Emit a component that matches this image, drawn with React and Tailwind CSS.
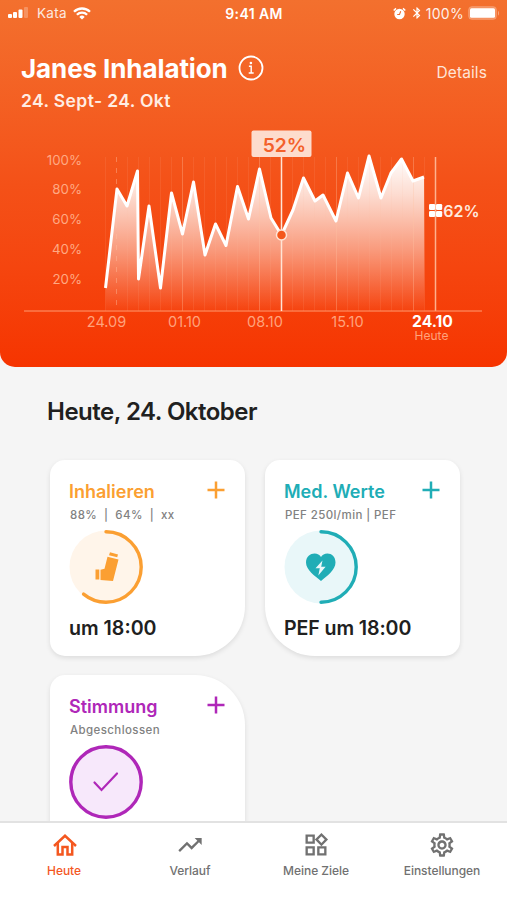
import {
  MdBluetooth,
  MdOutlineSettings,
  MdOutlineWidgets,
  MdTrendingUp,
} from "react-icons/md";

const points = [
  [105.5, 288], [117, 189], [127, 206], [137.5, 171], [138.5, 279],
  [149, 206], [160.5, 288], [171.5, 193], [182.5, 234], [193.5, 182],
  [205, 255], [215.5, 224], [226, 245.5], [237.5, 186.5], [248.5, 219],
  [259.5, 169], [271, 218], [281.5, 235], [293, 210], [303.5, 178],
  [315, 201], [323, 195], [336, 221], [347.5, 173], [358.5, 198],
  [369, 156], [381, 198], [391, 173], [401.5, 159], [413, 181], [424, 177],
];

const line = points.map((p) => p.join(",")).join(" ");

// one grid line per day, week starts are brighter
const gridLines = Array.from({ length: 31 }, (_, i) => 105.5 + i * 11);
const strongLines = [7, 14, 21, 28];

const yLabels = [
  { text: "100%", y: 165 },
  { text: "80%", y: 194 },
  { text: "60%", y: 223.5 },
  { text: "40%", y: 254 },
  { text: "20%", y: 283.5 },
];

const xLabels = [
  { text: "24.09", x: 106.5 },
  { text: "01.10", x: 184.5 },
  { text: "08.10", x: 265 },
  { text: "15.10", x: 347.5 },
];

function StatusBar() {
  return (
    <div className="grid h-[26px] grid-cols-3 items-center pl-2 pr-[7px] text-white">
      <div className="flex items-center">
        <svg width="21" height="12" viewBox="0 0 21 12" fill="currentColor">
          <rect x="0" y="7" width="4" height="4" rx="1" />
          <rect x="5" y="5" width="4" height="6" rx="1" />
          <rect x="10.5" y="2.5" width="4" height="8.5" rx="1" />
          <rect x="16" y="0" width="4" height="11" rx="1" opacity="0.25" />
        </svg>
        <span className="ml-[8px] text-[13.5px] tracking-[0.3px] opacity-85">Kata</span>
        <svg className="ml-[6px]" width="18" height="13" viewBox="0 0 18 13" fill="none" stroke="currentColor" strokeWidth="2.3">
          <path d="M1 4.800a11.300 11.300 0 0 1 16 0" />
          <path d="M3.900 7.700a7.200 7.200 0 0 1 10.200 0" />
          <path d="M9 12.600 6.300 9.900a3.800 3.800 0 0 1 5.400 0z" fill="currentColor" stroke="none" />
        </svg>
      </div>
      <div className="text-center text-[14px] font-semibold tracking-[0.4px]">9:41 AM</div>
      <div className="flex items-center justify-end">
        <svg width="13" height="13" viewBox="0 0 13 13" fill="none" stroke="currentColor">
          <circle cx="6.5" cy="7" r="5.2" fill="currentColor" stroke="none" />
          <path d="M.7 3.500 3 1.400M12.300 3.500 10 1.400" strokeWidth="1.5" />
          <path d="M7.700 4.200 6.500 7.500H4.200" stroke="#f26b2d" strokeWidth="1.1" />
        </svg>
        <MdBluetooth className="ml-[4px] h-[14px] w-[14px]" />
        <span className="ml-[2px] text-[14px] tracking-[0.3px] opacity-90">100%</span>
        <svg className="ml-[4px]" width="32" height="14" viewBox="0 0 32 14" fill="currentColor">
          <rect x=".5" y=".5" width="28" height="13" rx="3.5" fillOpacity="0.25" stroke="currentColor" strokeOpacity="0.15" />
          <rect x="2" y="2.2" width="25" height="9.6" rx="1.5" />
          <path d="M30 5v4.500c1.300-.4 1.300-4.100 0-4.500z" opacity="0.4" />
        </svg>
      </div>
    </div>
  );
}

function Chart() {
  return (
    <svg className="block" width="507" height="247" viewBox="0 120 507 247" fill="none">
      <defs>
        <linearGradient id="area" gradientUnits="userSpaceOnUse" x1="0" y1="156" x2="0" y2="310">
          <stop offset="0" stopColor="#fff" />
          <stop offset="0.25" stopColor="#fff" stopOpacity="0.8" />
          <stop offset="0.6" stopColor="#fff" stopOpacity="0.46" />
          <stop offset="1" stopColor="#fff" stopOpacity="0.03" />
        </linearGradient>
      </defs>

      <polygon points={`105.5,310 ${line} 424.5,310`} fill="url(#area)" />

      {gridLines.map((x, i) => (
        <line
          key={i}
          x1={x}
          x2={x}
          y1="157"
          y2="311"
          stroke="#ffc3a4"
          strokeWidth={i === 30 ? 1.5 : 1}
          strokeOpacity={i === 30 ? 0.85 : strongLines.includes(i) ? 0.32 : i === 1 ? 0.4 : 0.11}
          strokeDasharray={i === 1 ? "5 6" : undefined}
        />
      ))}

      <polyline points={line} stroke="#fff" strokeWidth="3" strokeLinejoin="round" />
      <line x1="24" x2="482" y1="311" y2="311" stroke="#ff9b73" />

      {/* Selected day */}
      <line x1="281.5" x2="281.5" y1="157" y2="311" stroke="#ffe4d6" strokeWidth="1.5" />
      <circle cx="281.5" cy="235" r="5" fill="#f4581c" stroke="#ffe4d6" strokeWidth="1.5" />
      <rect x="251.5" y="130.5" width="60" height="26.5" rx="2" fill="#fddccd" />
      <text x="284.5" y="151.5" textAnchor="middle" fontSize="19.3" fontWeight="600" fill="#f4602a">52%</text>

      {/* Goal */}
      <g fill="#fff">
        <rect x="429" y="204" width="6.2" height="6" rx="1.3" />
        <rect x="436" y="204" width="6.2" height="6" rx="1.3" />
        <rect x="429" y="211" width="6.2" height="6" rx="1.3" />
        <rect x="436" y="211" width="6.2" height="6" rx="1.3" />
      </g>
      <text x="461.5" y="217" textAnchor="middle" fontSize="16" fontWeight="600" fill="#ffeadf">62%</text>

      {yLabels.map((l) => (
        <text key={l.text} x="82" y={l.y} textAnchor="end" fontSize="13.3" fill="#ffa983">{l.text}</text>
      ))}
      {xLabels.map((l) => (
        <text key={l.text} x={l.x} y="327" textAnchor="middle" fontSize="14.5" fill="#ffa27c">{l.text}</text>
      ))}
      <text x="432.5" y="327" textAnchor="middle" fontSize="15.7" fontWeight="700" fill="#fff">24.10</text>
      <text x="431.5" y="339.5" textAnchor="middle" fontSize="12" fill="#ffa27c">Heute</text>
    </svg>
  );
}

function Ring({ color, background, percent, children }) {
  return (
    <svg className="block" width="74" height="74" viewBox="0 0 74 74" fill="none">
      <circle cx="37" cy="37" r="36.5" fill={background} />
      <circle
        cx="37"
        cy="37"
        r="35.2"
        stroke={color}
        strokeWidth="3.4"
        strokeLinecap="round"
        pathLength="100"
        strokeDasharray={`${percent} 100`}
        transform="rotate(-90 37 37)"
      />
      {children}
    </svg>
  );
}

function Card({ title, subtitle, footer, color, shape, subClass, footerClass, children }) {
  return (
    <div className={`h-[196px] bg-white px-5 pt-5 shadow-[0_2px_5px_rgba(0,0,0,0.1)] ${shape}`}>
      <div className="flex items-start justify-between" style={{ color }}>
        <h3 className="-ml-[1px] text-[18px] leading-6 font-semibold">{title}</h3>
        <svg className="mt-[1px]" width="18" height="18" viewBox="0 0 18 18" stroke="currentColor" strokeWidth="2.5">
          <path d="M9 .5v17M.5 9h17" />
        </svg>
      </div>
      <p className={`mt-[3px] text-[11.5px] leading-4 font-medium whitespace-pre text-[#818181] ${subClass}`}>{subtitle}</p>
      <div className="mt-[7px] -ml-[1px]">{children}</div>
      <p className={`mt-[12px] -ml-[1px] text-[19.6px] leading-6 font-semibold text-[#202020] ${footerClass || ""}`}>{footer}</p>
    </div>
  );
}

function HomeIcon({ className }) {
  return (
    <svg className={className} viewBox="0 0 28 28" fill="none" stroke="currentColor" strokeWidth="2.5">
      <path d="M3 15 14 4.800 25 15" />
      <path d="M6.800 12V23.500h4.700V16h5v7.500h4.700V12" />
    </svg>
  );
}

function NavItem({ icon: Icon, label, active }) {
  return (
    <button className={`flex flex-1 flex-col items-center ${active ? "text-[#f4571f]" : "text-[#717171]"}`}>
      <Icon className={`h-[28px] w-[28px] ${active ? "ml-[2px]" : ""}`} />
      <span className="mt-[4px] text-[12px] leading-4 font-medium tracking-[-0.05px]">{label}</span>
    </button>
  );
}

export default function App() {
  return (
    <div className="flex h-[900px] w-[507px] flex-col overflow-hidden bg-[#f5f5f5] font-['Inter',sans-serif]">
      <header className="h-[367px] shrink-0 overflow-hidden rounded-b-[15px] bg-linear-to-b from-[#f3702e] via-[#f45118] to-[#f63400]">
        <StatusBar />
        <div className="flex h-[94px] items-start justify-between pr-5 pl-[21px] text-white">
          <div className="pt-[27px]">
            <div className="flex items-center">
              <h1 className="text-[26px] leading-8 font-bold tracking-[-0.1px]">Janes Inhalation</h1>
              <svg className="mb-[3px] ml-[10px]" width="26" height="26" viewBox="0 0 26 26" fill="none" stroke="currentColor">
                <circle cx="13" cy="13" r="11.5" strokeWidth="1.8" />
                <path d="M10.900 11.300h2.300v6.500M10.700 18h5" strokeWidth="1.4" />
                <circle cx="12.9" cy="8" r="1.3" fill="currentColor" stroke="none" />
              </svg>
            </div>
            <p className="mt-[4px] text-[17.5px] leading-6 font-semibold tracking-[0.38px] text-[#ffede3]">24. Sept- 24. Okt</p>
          </div>
          <a className="pt-[35px] text-[15.5px] tracking-[0.1px] text-[#ffe4d6]">Details</a>
        </div>
        <Chart />
      </header>

      <main className="h-[454px] shrink-0 overflow-hidden px-[50px] pt-[29px]">
        <h2 className="-ml-[3px] text-[24px] leading-8 font-semibold tracking-[-0.5px] text-[#202020]">Heute, 24. Oktober</h2>
        <div className="mt-8 grid grid-cols-[195px_195px] gap-x-5 gap-y-[19px]">
          <Card
            title="Inhalieren"
            subtitle="88%  |  64%  |  xx"
            footer="um 18:00"
            color="#fb9f32"
            shape="rounded-[15px] rounded-br-[50px]"
            subClass="tracking-[0.4px]"
          >
            <Ring color="#fb9f32" background="#fff5ea" percent={61}>
              <g fill="#fb9f32">
                <path d="M41 22.300 49 24.400 48.200 27.300 40 25.200z" />
                <path d="M38.500 26.800 49.500 29.600 44 51 31.500 50V39.800L35.500 38.800z" />
                <path d="M26.500 39.500h3.800v10h-3.800z" />
              </g>
            </Ring>
          </Card>
          <Card
            title="Med. Werte"
            subtitle="PEF 250l/min | PEF"
            footer="PEF um 18:00"
            color="#20adb6"
            shape="rounded-[15px] rounded-bl-[50px]"
            subClass="tracking-[0.4px]"
            footerClass="tracking-[-0.1px]"
          >
            <Ring color="#20adb6" background="#e9f7f9" percent={50}>
              <path
                d="M37 51C31 46 22 40 22 32.500 22 26.500 26.500 23.500 30.500 23.500c3 0 5.200 1.500 6.500 3.500 1.300-2 3.500-3.500 6.500-3.500 4 0 8 3 8 9C51.500 40 43 46 37 51z"
                fill="#20adb6"
              />
              <path d="M38.500 30.500 31.500 38.300h4.300L34.300 45.500 41.600 36.700H37.200z" fill="#e9f7f9" />
            </Ring>
          </Card>
          <Card
            title="Stimmung"
            subtitle="Abgeschlossen"
            color="#af27b8"
            shape="rounded-[15px] rounded-tr-[50px]"
            subClass="tracking-[0.4px]"
          >
            <Ring color="#af27b8" background="#f7e8fb" percent={100}>
              <path d="M25.500 37.500 32.500 45 48 28.500" stroke="#af27b8" strokeWidth="2.2" strokeLinecap="round" />
            </Ring>
          </Card>
        </div>
      </main>

      <nav className="flex h-[79px] shrink-0 border-t-2 border-[#e2e2e2] bg-white pr-[2px] pl-[1px] pt-2">
        <NavItem icon={HomeIcon} label="Heute" active />
        <NavItem icon={MdTrendingUp} label="Verlauf" />
        <NavItem icon={MdOutlineWidgets} label="Meine Ziele" />
        <NavItem icon={MdOutlineSettings} label="Einstellungen" />
      </nav>
    </div>
  );
}
